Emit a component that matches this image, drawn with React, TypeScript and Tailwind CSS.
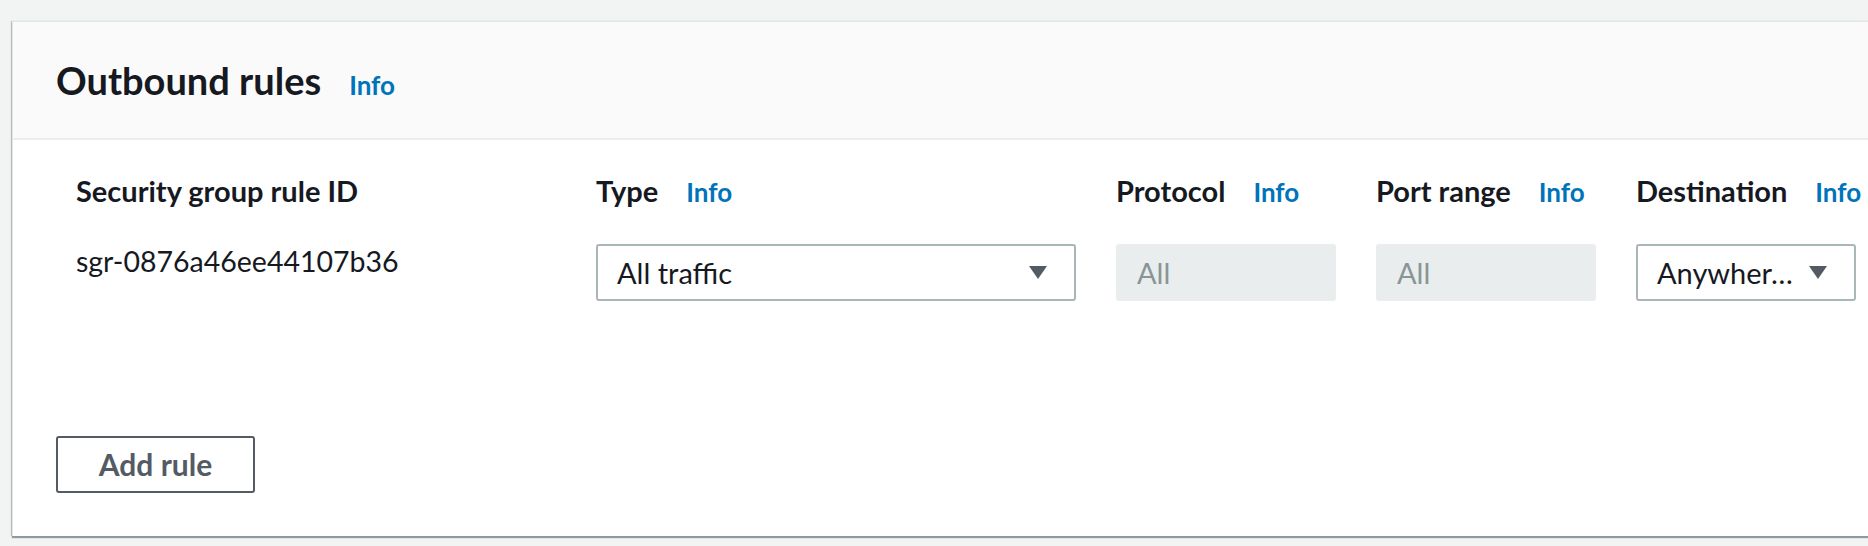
import React from 'react';

const font = { fontFamily: 'Lato, "Noto Sans", sans-serif' };

const Info = () => (
  <a className="ml-[28px] text-[26px] font-bold text-[#0073bb]">Info</a>
);

const Caret = () => (
  <svg width="20" height="15" viewBox="0 0 20 15" className="shrink-0">
    <path d="M1 1 L19 1 L10 14 Z" fill="#545b64" />
  </svg>
);

const Label: React.FC<{ text: string; info?: boolean }> = ({ text, info }) => (
  <div className="flex h-[40px] items-baseline whitespace-nowrap">
    <span className="text-[29px] font-bold leading-[40px] text-[#16191f]">{text}</span>
    {info && <Info />}
  </div>
);

const Select: React.FC<{ value: string }> = ({ value }) => (
  <div className="flex h-[57px] items-center justify-between rounded-[3px] border-2 border-[#aab7b8] bg-white pl-[19px] pr-[26px]">
    <span className="truncate text-[29px] text-[#16191f]">{value}</span>
    <Caret />
  </div>
);

const Disabled: React.FC<{ value: string }> = ({ value }) => (
  <div className="flex h-[57px] items-center rounded-[3px] bg-[#eaeded] px-[21px]">
    <span className="text-[29px] text-[#879596]">{value}</span>
  </div>
);

export default function App() {
  return (
    <div
      className="h-[546px] w-full overflow-hidden bg-[#f2f3f3] pl-[12px] pt-[21px]"
      style={font}
    >
      <div className="h-[515px] w-[1900px] border-l border-t border-[#e4e7e7] bg-white shadow-[0_2px_1px_0_rgba(0,28,36,0.4),-1px_0_1px_0_rgba(0,28,36,0.2)]">
        <div className="flex h-[118px] items-center border-b-2 border-[#eaeded] bg-[#fafafa] pl-[43px]">
          <div className="flex items-baseline">
            <h2 className="text-[38px] font-bold text-[#16191f]">Outbound rules</h2>
            <Info />
          </div>
        </div>

        <div className="pl-[63px] pt-[31px]">
          <div className="grid grid-cols-[480px_480px_220px_220px_220px] gap-x-[40px] gap-y-[33px]">
            <Label text="Security group rule ID" />
            <Label text="Type" info />
            <Label text="Protocol" info />
            <Label text="Port range" info />
            <Label text="Destination" info />

            <div className="-mt-[4px] text-[28.5px] leading-[42px] text-[#16191f]">sgr-0876a46ee44107b36</div>
            <Select value="All traffic" />
            <Disabled value="All" />
            <Disabled value="All" />
            <Select value="Anywher…" />
          </div>
        </div>

        <div className="pl-[43px] pt-[135px]">
          <button className="h-[57px] w-[199px] rounded-[3px] border-2 border-[#545b64] bg-white text-[30px] font-bold text-[#545b64]">
            Add rule
          </button>
        </div>
      </div>
    </div>
  );
}
